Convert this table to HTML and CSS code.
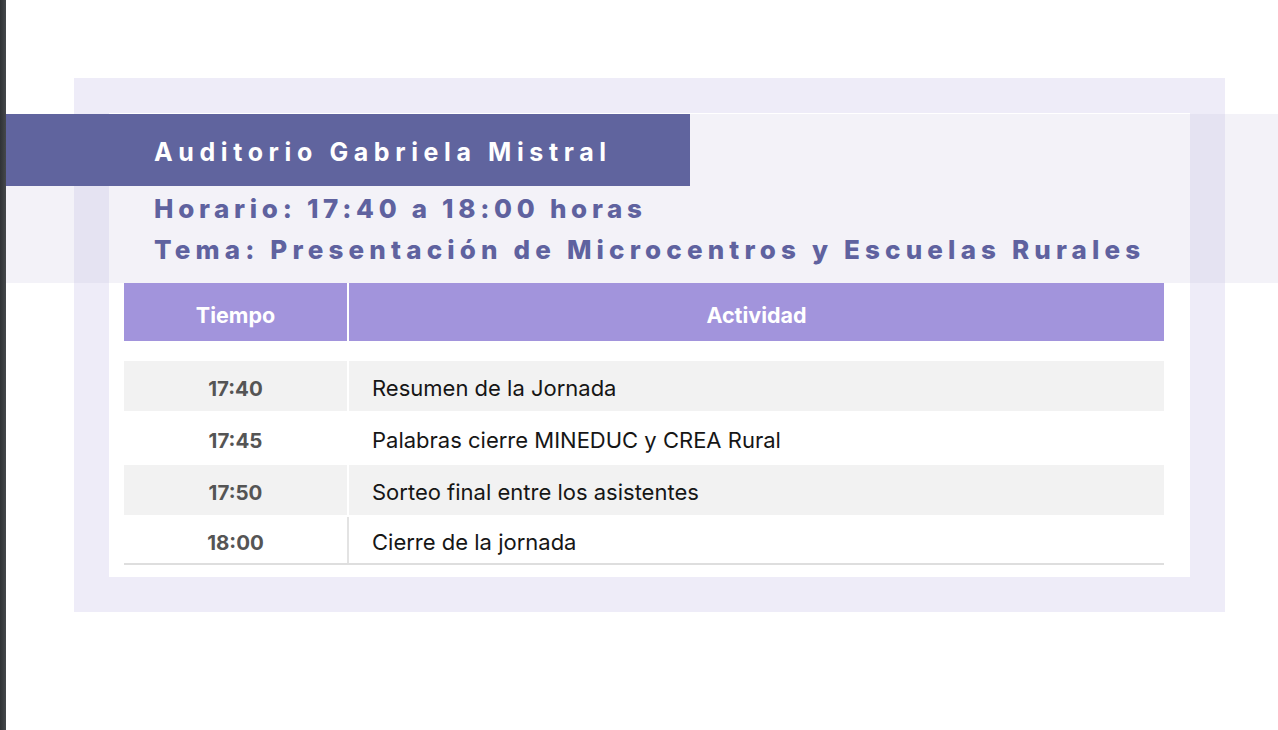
FILE: index.html
```html
<!DOCTYPE html>
<html lang="es">
<head>
<meta charset="utf-8">
<title>Auditorio Gabriela Mistral</title>
<link rel="stylesheet" href="styles.css">
</head>
<body>
<div class="page">
  <div class="edge"></div>
  <div class="main">
    <div class="outer">
      <div class="inner">
        <div class="table">
          <div class="row head">
            <div class="cell c1">Tiempo</div>
            <div class="cell c2">Actividad</div>
          </div>
          <div class="row shade">
            <div class="cell c1 time">17:40</div>
            <div class="cell c2 act">Resumen de la Jornada</div>
          </div>
          <div class="row">
            <div class="cell c1 time">17:45</div>
            <div class="cell c2 act">Palabras cierre MINEDUC y CREA Rural</div>
          </div>
          <div class="row shade">
            <div class="cell c1 time">17:50</div>
            <div class="cell c2 act">Sorteo final entre los asistentes</div>
          </div>
          <div class="row last">
            <div class="cell c1 time">18:00</div>
            <div class="cell c2 act">Cierre de la jornada</div>
          </div>
        </div>
      </div>
    </div>
    <div class="band">
      <div class="venue">Auditorio Gabriela Mistral</div>
      <div class="line line-hour">Horario: 17:40 a 18:00 horas</div>
      <div class="line line-topic">Tema: Presentación de Microcentros y Escuelas Rurales</div>
    </div>
  </div>
</div>
</body>
</html>
```

FILE: styles.css
```css
html, body {
  margin: 0;
  padding: 0;
  background: #ffffff;
}

body {
  font-family: Inter, "Open Sans", "DejaVu Sans", sans-serif;
}

.page {
  display: flex;
  width: 1278px;
  height: 730px;
  overflow: hidden;
}

.edge {
  width: 6px;
  flex: none;
  background: linear-gradient(90deg, #2f3235, #45484b);
}

.main {
  flex: 1;
  position: relative;
  padding: 78px 0 0 68px;
}

.outer {
  width: 1151px;
  height: 534px;
  box-sizing: border-box;
  padding: 35px;
  background: #eeecf8;
}

.inner {
  height: 464px;
  box-sizing: border-box;
  background: #ffffff;
  padding: 170px 0 0 15px;
}

.band {
  position: absolute;
  left: 0;
  right: 0;
  top: 114px;
  height: 169px;
  background: rgba(200, 195, 225, 0.22);
}

.venue {
  width: 684px;
  height: 72px;
  box-sizing: border-box;
  padding-left: 148px;
  background: #60649e;
  color: #ffffff;
  font-size: 25px;
  font-weight: 700;
  letter-spacing: 5.6px;
  line-height: 76px;
  white-space: nowrap;
}

.line {
  padding-left: 148px;
  color: #5f629f;
  font-size: 26px;
  font-weight: 800;
  line-height: 41px;
  white-space: nowrap;
}

.line-hour {
  margin-top: 2px;
  letter-spacing: 4.7px;
}

.line-topic {
  letter-spacing: 5.15px;
}

.table {
  width: 1040px;
  display: flex;
  flex-direction: column;
  gap: 2px;
}

.row {
  display: flex;
  gap: 2px;
  height: 50px;
}

.cell {
  display: flex;
  align-items: center;
  box-sizing: border-box;
  padding-top: 4px;
}

.c1 {
  width: 223px;
  flex: none;
  justify-content: center;
}

.c2 {
  flex: 1;
}

.head {
  height: 58px;
  margin-bottom: 18px;
}

.head .cell {
  background: #a294dc;
  color: #ffffff;
  font-size: 21.5px;
  font-weight: 700;
  justify-content: center;
  padding-top: 6px;
}

.shade .cell {
  background: #f2f2f2;
}

.time {
  color: #555555;
  font-size: 20.5px;
  font-weight: 700;
}

.act {
  padding-left: 23px;
  color: #161616;
  font-size: 22px;
  font-weight: 400;
}

.last {
  height: 46px;
  background: #e3e3e3;
  border-bottom: 2px solid #dedede;
}

.last .cell {
  background: #ffffff;
}
```
